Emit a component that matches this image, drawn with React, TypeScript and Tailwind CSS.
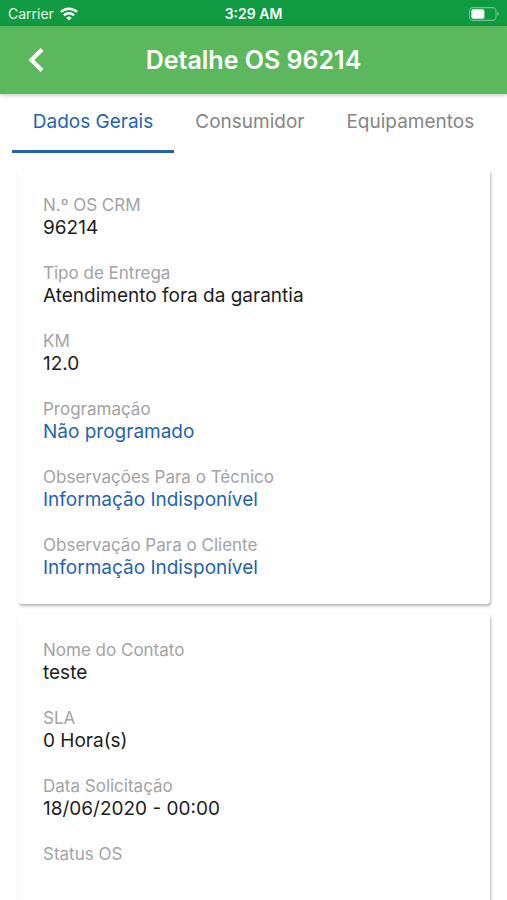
import React, { useState } from 'react';
import clsx from 'clsx';

type Field = {
    label: string;
    value: string;
    link?: boolean;
};

const tabs = ['Dados Gerais', 'Consumidor', 'Equipamentos'];

const orderFields: Field[] = [
    { label: 'N.º OS CRM', value: '96214' },
    { label: 'Tipo de Entrega', value: 'Atendimento fora da garantia' },
    { label: 'KM', value: '12.0' },
    { label: 'Programação', value: 'Não programado', link: true },
    { label: 'Observações Para o Técnico', value: 'Informação Indisponível', link: true },
    { label: 'Observação Para o Cliente', value: 'Informação Indisponível', link: true },
];

const contactFields: Field[] = [
    { label: 'Nome do Contato', value: 'teste' },
    { label: 'SLA', value: '0 Hora(s)' },
    { label: 'Data Solicitação', value: '18/06/2020 - 00:00' },
    { label: 'Status OS', value: '' },
];

const WifiIcon: React.FC = () => (
    <svg width="18" height="14" viewBox="0 0 18 14" fill="none" stroke="currentColor" strokeWidth="2.4" aria-hidden="true">
        <path d="M0.9 5a11.6 11.6 0 0 1 16.2 0" />
        <path d="M3.900 8.300a7.300 7.300 0 0 1 10.200 0" />
        <path d="M9 13.6 6.3 10.9a3.8 3.8 0 0 1 5.4 0Z" fill="currentColor" stroke="none" />
    </svg>
);

const BatteryIcon: React.FC = () => (
    <svg width="30" height="14" viewBox="0 0 30 14" fill="none" aria-hidden="true">
        <rect x="0.6" y="0.6" width="26.4" height="12.8" rx="3.6" stroke="#fff" strokeOpacity="0.4" strokeWidth="1.1" />
        <rect x="2.4" y="2.2" width="13" height="9.6" rx="1.8" fill="#fff" />
        <path d="M28.400 4.800c.9.400 1.400 1.200 1.400 2.200s-.5 1.800-1.400 2.200z" fill="#fff" fillOpacity="0.45" />
    </svg>
);

const StatusBar: React.FC = () => (
    <div className="grid h-[26px] grid-cols-3 items-center bg-[#109a41] px-2 pt-px text-[14px] leading-5 text-white">
        <div className="flex items-center gap-1.5">
            <span className="text-white/90">Carrier</span>
            <WifiIcon />
        </div>
        <span className="text-center font-semibold">3:29 AM</span>
        <div className="flex justify-end">
            <BatteryIcon />
        </div>
    </div>
);

const Card: React.FC<{ fields: Field[] }> = ({ fields }) => (
    <dl className="flex flex-col gap-[22px] rounded-[4px] bg-white px-[25px] pt-[25px] pb-6 shadow-[1px_2px_3px_rgba(0,0,0,0.3)]">
        {fields.map((field) => (
            <div key={field.label}>
                <dt className="text-[17px] leading-[22px] text-[#a3a3a3]">{field.label}</dt>
                <dd className={clsx('min-h-6 text-[19px] leading-6', field.link ? 'text-[#2463ae]' : 'text-[#1c1c1c]')}>
                    {field.value}
                </dd>
            </div>
        ))}
    </dl>
);

const App: React.FC = () => {
    const [activeTab, setActiveTab] = useState(tabs[0]);

    return (
        <div className="flex h-screen flex-col overflow-hidden bg-white font-['Inter',sans-serif]">
            <StatusBar />
            <header className="z-10 grid h-[68px] shrink-0 grid-cols-[72px_1fr_72px] items-center bg-[#5cb85c] text-white shadow-[0_1px_4px_rgba(0,0,0,0.25)]">
                <button type="button" aria-label="Voltar" className="flex h-12 items-center justify-center">
                    <svg width="16" height="26" viewBox="0 0 16 26" fill="none" stroke="currentColor" strokeWidth="4.200" aria-hidden="true">
                        <path d="M14 2.400 3.400 13 14 23.600" />
                    </svg>
                </button>
                <h1 className="text-center text-[25px] leading-8 font-semibold">Detalhe OS 96214</h1>
            </header>
            <nav role="tablist" className="flex h-[59px] shrink-0 justify-center">
                {tabs.map((tab) => (
                    <button
                        key={tab}
                        type="button"
                        role="tab"
                        aria-selected={tab === activeTab}
                        onClick={() => setActiveTab(tab)}
                        className={clsx(
                            'border-b-[3px] px-[21px] text-[19px] leading-6',
                            tab === activeTab ? 'border-[#2463ae] text-[#2463ae]' : 'border-transparent text-[#858585]'
                        )}
                    >
                        {tab}
                    </button>
                ))}
            </nav>
            <main className="flex min-h-0 flex-1 flex-col gap-2.5 overflow-hidden pt-4 pr-[17px] pl-[18px] *:shrink-0">
                <Card fields={orderFields} />
                <Card fields={contactFields} />
            </main>
        </div>
    );
};

export default App;
